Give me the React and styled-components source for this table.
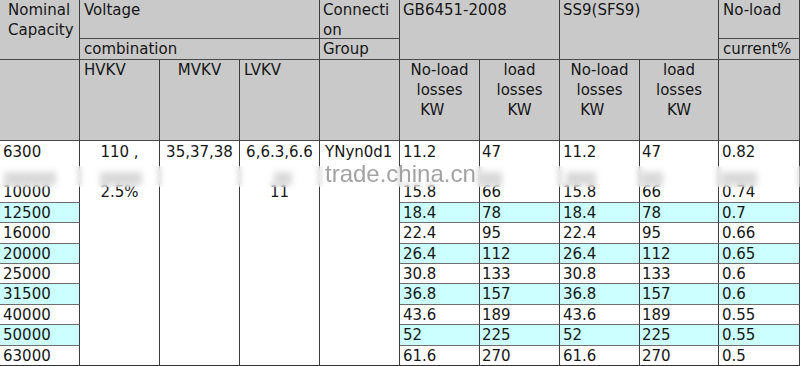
import React from "react";
import styled, { createGlobalStyle } from "styled-components";

const GlobalStyle = createGlobalStyle`
  html, body {
    margin: 0;
    padding: 0;
    background: #fff;
  }
  body {
    font-family: "DejaVu Sans", Verdana, sans-serif;
  }
`;

const HEAD_BG = "#c9c9c9";
const CYAN = "#ccffff";

// 10 columns, 13 row tracks (3 header rows, 10 data rows with the first split in two)
const Sheet = styled.div`
  position: relative;
  display: grid;
  width: 800px;
  grid-template-columns: repeat(8, 80px) 79px 81px;
  grid-template-rows: 39px 21px 81px 41px 21px 20px 21px 20px 20px 21px 20px 21px 20px;
  font-size: 15px;
  line-height: 20px;
  color: #161616;
  overflow: hidden;
`;

const Cell = styled.div`
  box-sizing: border-box;
  grid-column: ${({ $c, $cs = 1 }) => `${$c} / span ${$cs}`};
  grid-row: ${({ $r, $rs = 1 }) => `${$r} / span ${$rs}`};
  padding-left: ${({ $pad = 3 }) => $pad}px;
  text-align: ${({ $align = "left" }) => $align};
  white-space: nowrap;
  border-right: 1px solid #3c3c3c;
`;

const HeadCell = styled(Cell)`
  background: ${HEAD_BG};
  border-bottom: 1px solid #4a4a4a;
  display: flex;
  flex-direction: column;
  justify-content: ${({ $mid }) => ($mid ? "center" : "flex-start")};
  align-items: ${({ $align = "left" }) =>
    $align === "center" ? "center" : "flex-start"};
`;

const DataCell = styled(Cell)`
  background: ${({ $cyan }) => ($cyan ? CYAN : "#fff")};
  border-bottom: ${({ $open, $last }) =>
    $open ? "none" : `1px solid ${$last ? "#333" : "#6e6e6e"}`};
  padding-top: ${({ $top }) => ($top ? 1 : 0)}px;
  display: flex;
  flex-direction: column;
  justify-content: ${({ $top }) => ($top ? "flex-start" : "center")};
`;

const MergedCell = styled(Cell)`
  background: #fff;
  border-bottom: 1px solid #333;
  padding-top: 1px;
  display: flex;
  flex-direction: column;
  align-items: ${({ $align = "left" }) =>
    $align === "center" ? "center" : "flex-start"};
`;

const Line = styled.span`
  display: block;
  height: 20px;
  white-space: pre;
`;

// tight line box so the mark sits in the gap between the two first rows
const Watermark = styled.div`
  position: absolute;
  left: 325px;
  top: 167px;
  font-family: "Liberation Sans", Arial, sans-serif;
  font-size: 24px;
  line-height: 14px;
  color: #a3a3a3;
  pointer-events: none;
`;

const BlurBand = styled.div`
  position: absolute;
  left: 0;
  top: 166px;
  width: 800px;
  height: 21px;
  backdrop-filter: blur(2.5px);
  background: rgba(255, 255, 255, 0.3);
  pointer-events: none;
`;

const Smudge = styled.div`
  position: absolute;
  top: 172px;
  height: 13px;
  background: #c4c4c4;
  filter: blur(3px);
  opacity: 0.65;
  pointer-events: none;
`;

const capacities = ["6300", "10000", "12500", "16000", "20000", "25000", "31500", "40000", "50000", "63000"];
const noLoad = ["11.2", "15.8", "18.4", "22.4", "26.4", "30.8", "36.8", "43.6", "52", "61.6"];
const load = ["47", "66", "78", "95", "112", "133", "157", "189", "225", "270"];
const current = ["0.82", "0.74", "0.7", "0.66", "0.65", "0.6", "0.6", "0.55", "0.55", "0.5"];

const dataColumns = [
  { c: 1, values: capacities },
  { c: 6, values: noLoad },
  { c: 7, values: load },
  { c: 8, values: noLoad },
  { c: 9, values: load },
  { c: 10, values: current },
];

const smudges = [
  [4, 52],
  [100, 42],
  [274, 18],
  [480, 22],
  [566, 30],
  [641, 22],
  [721, 36],
];

const LossHeader = ({ c, noLoadCol }) => (
  <HeadCell $c={c} $r={3} $align="center" $pad={0}>
    <Line>{noLoadCol ? "No-load" : "load"}</Line>
    <Line>losses</Line>
    <Line>{noLoadCol ? "KW\u00a0\u00a0\u00a0" : "KW"}</Line>
  </HeadCell>
);

export default function App() {
  return (
    <>
      <GlobalStyle />
      <Sheet>
        {/* header rows 1 + 2 */}
        <HeadCell $c={1} $r={1} $rs={2} $pad={8}>
          <Line>Nominal</Line>
          <Line>Capacity</Line>
        </HeadCell>
        <HeadCell $c={2} $cs={3} $r={1} $pad={4}>
          <Line>Voltage</Line>
        </HeadCell>
        <HeadCell $c={5} $r={1}>
          <Line>Connecti</Line>
          <Line>on</Line>
        </HeadCell>
        <HeadCell $c={6} $cs={2} $r={1} $rs={2}>
          <Line>GB6451-2008</Line>
        </HeadCell>
        <HeadCell $c={8} $cs={2} $r={1} $rs={2}>
          <Line>SS9(SFS9)</Line>
        </HeadCell>
        <HeadCell $c={10} $r={1} $pad={4}>
          <Line>No-load</Line>
        </HeadCell>
        <HeadCell $c={2} $cs={3} $r={2} $pad={4} $mid>
          <Line>combination</Line>
        </HeadCell>
        <HeadCell $c={5} $r={2} $mid>
          <Line>Group</Line>
        </HeadCell>
        <HeadCell $c={10} $r={2} $pad={4} $mid>
          <Line>current%</Line>
        </HeadCell>

        {/* header row 3 */}
        <HeadCell $c={1} $r={3} />
        <HeadCell $c={2} $r={3} $pad={4}>
          <Line>HVKV</Line>
        </HeadCell>
        <HeadCell $c={3} $r={3} $align="center" $pad={0}>
          <Line>MVKV</Line>
        </HeadCell>
        <HeadCell $c={4} $r={3} $pad={4}>
          <Line>LVKV</Line>
        </HeadCell>
        <HeadCell $c={5} $r={3} />
        <LossHeader c={6} noLoadCol />
        <LossHeader c={7} />
        <LossHeader c={8} noLoadCol />
        <LossHeader c={9} />
        <HeadCell $c={10} $r={3} />

        {/* merged voltage / connection cells */}
        <MergedCell $c={2} $r={4} $rs={10} $align="center" $pad={0}>
          <Line>{"110 ,"}</Line>
          <Line />
          <Line>2.5%</Line>
        </MergedCell>
        <MergedCell $c={3} $r={4} $rs={10} $align="center" $pad={0}>
          <Line>35,37,38</Line>
        </MergedCell>
        <MergedCell $c={4} $r={4} $rs={10} $align="center" $pad={0}>
          <Line>6,6.3,6.6</Line>
          <Line />
          <Line>11</Line>
        </MergedCell>
        <MergedCell $c={5} $r={4} $rs={10} $pad={5}>
          <Line>YNyn0d1</Line>
        </MergedCell>

        {/* data columns */}
        {dataColumns.map(({ c, values }) =>
          values.map((v, i) => (
            <DataCell
              key={`${c}-${i}`}
              $c={c}
              $r={4 + i}
              $pad={c === 7 || c === 9 ? 2 : 3}
              $top={i === 0}
              $open={i === 0}
              $last={i === values.length - 1}
              $cyan={i >= 2 && i % 2 === 0}
            >
              <Line>{v}</Line>
            </DataCell>
          ))
        )}

        <BlurBand />
        {smudges.map(([left, width]) => (
          <Smudge key={left} style={{ left, width }} />
        ))}
        <Watermark>trade.china.cn</Watermark>
      </Sheet>
    </>
  );
}
